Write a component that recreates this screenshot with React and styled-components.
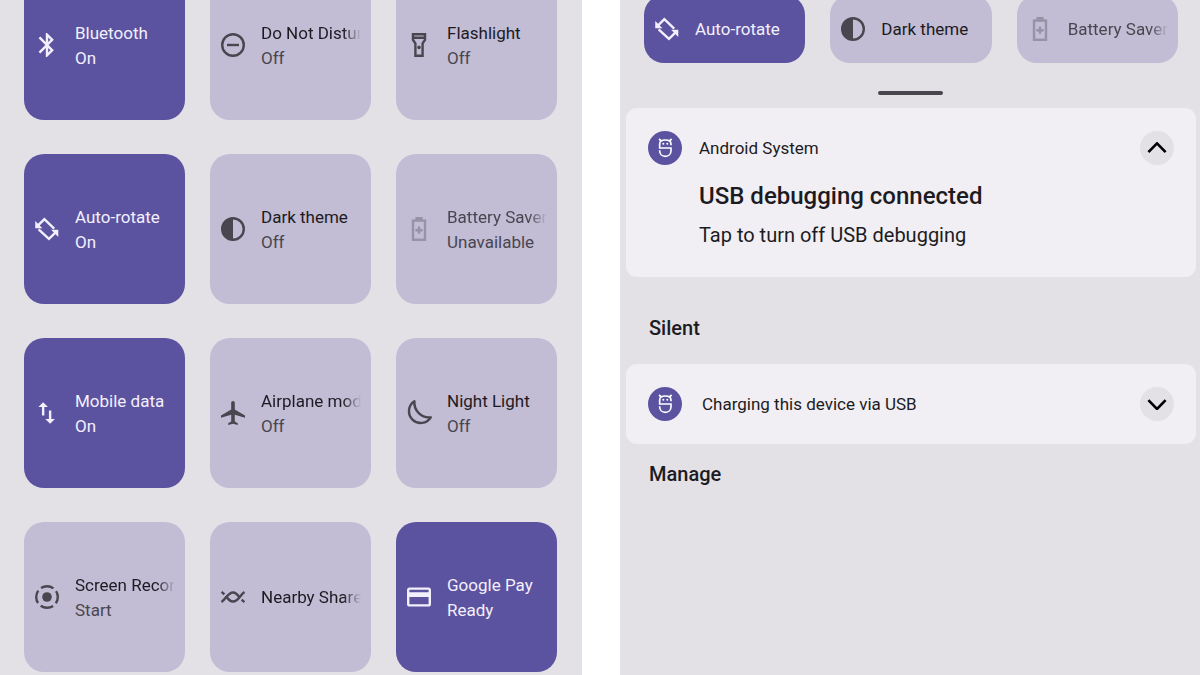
import React from "react";
import styled, { createGlobalStyle, css } from "styled-components";

const color = {
  panel: "#e3e0e6",
  card: "#f1eff4",
  tileOff: "#c2bcd5",
  tileOn: "#5b53a0",
  ink: "#1d1b22",
  inkSoft: "#4a464f",
  inkOnAccent: "#f3effc",
};

const GlobalStyle = createGlobalStyle`
  *, *::before, *::after { box-sizing: border-box; }
  body {
    margin: 0;
    background: #fff;
    font-family: Roboto, "Liberation Sans", sans-serif;
    color: ${color.ink};
  }
  button { font: inherit; color: inherit; border: 0; background: none; padding: 0; }
  h2, h3, p { margin: 0; }
`;

const Page = styled.main`
  display: grid;
  grid-template-columns: 582fr 580fr;
  column-gap: 38px;
  min-height: 100vh;
`;

const Panel = styled.section`
  min-width: 0;
  overflow: hidden;
  background: ${color.panel};
`;

const TileGrid = styled.div`
  display: grid;
  grid-template-columns: repeat(3, minmax(0, 1fr));
  gap: 34px 25px;
  margin-top: ${(p) => (p.$compact ? "-5px" : "-30px")};
  padding: ${(p) => (p.$compact ? "0 22px 0 24px" : "0 25px 0 24px")};
`;

const TileButton = styled.button`
  display: flex;
  align-items: center;
  gap: 16px;
  height: ${(p) => (p.$compact ? "68px" : "150px")};
  padding: 0 10px 0 11px;
  border-radius: 20px;
  text-align: left;
  background: ${(p) => (p.$on ? color.tileOn : color.tileOff)};
  color: ${(p) => (p.$on ? color.inkOnAccent : color.inkSoft)};
`;

const Glyph = styled.svg`
  flex: none;
  width: 24px;
  height: 24px;
  overflow: visible;
  opacity: ${(p) => (p.$dim ? 0.35 : 1)};
`;

const TileText = styled.span`
  display: flex;
  flex-direction: column;
  flex: 1;
  min-width: 0;
  padding-top: ${(p) => (p.$stacked ? "2px" : "0")};
  font-size: 17px;
  line-height: 25px;
`;

const TileTitle = styled.span`
  overflow: hidden;
  white-space: nowrap;
  ${(p) => p.$strong && css`color: ${color.ink};`}
  ${(p) => p.$fade && css`mask-image: linear-gradient(to left, transparent, #000 18px);`}
`;

const Handle = styled.div`
  width: 65px;
  height: 4px;
  margin: 28px auto 13px;
  border-radius: 2px;
  background: ${color.inkSoft};
`;

const Card = styled.article`
  margin: 0 4px 0 6px;
  padding: ${(p) => (p.$expanded ? "23px 22px 30px" : "23px 22px")};
  border-radius: 11px;
  background: ${color.card};
`;

const CardHeader = styled.header`
  display: flex;
  align-items: center;
  gap: ${(p) => (p.$expanded ? "17px" : "20px")};
`;

const AppBadge = styled.svg`
  flex: none;
  width: 34px;
  height: 34px;
`;

const CardLabel = styled.span`
  flex: 1;
  font-size: 17px;
  line-height: 24px;
`;

const ExpandButton = styled.button`
  display: grid;
  place-items: center;
  width: 34px;
  height: 34px;
  border-radius: 50%;
  background: ${color.panel};
`;

const CardBody = styled.div`
  padding-left: 51px;
`;

const CardTitle = styled.h3`
  margin-top: 16px;
  font-size: 24px;
  font-weight: 500;
  line-height: 30px;
`;

const CardText = styled.p`
  margin-top: 12px;
  font-size: 20px;
  line-height: 24px;
`;

const SectionTitle = styled.h2`
  margin: 37px 29px 22px;
  font-size: 20px;
  font-weight: 500;
  line-height: 28px;
`;

const ManageButton = styled.button`
  display: block;
  margin: 16px 29px;
  && {
    font-size: 20px;
    font-weight: 500;
    line-height: 28px;
  }
`;

const stroke = { fill: "none", stroke: "currentColor", strokeWidth: 2 };

const shapes = {
  bluetooth: (
    <path
      fill="currentColor"
      d="M17.71 7.71 12 2h-1v7.59L6.41 5 5 6.41 10.59 12 5 17.59 6.41 19 11 14.41V22h1l5.71-5.71-4.3-4.29 4.3-4.29zM13 5.83l1.88 1.88L13 9.59V5.83zm1.88 10.46L13 18.17v-3.76l1.88 1.88z"
    />
  ),
  dnd: (
    <g {...stroke}>
      <circle cx="12" cy="12" r="9" />
      <path d="M7 12h10" />
    </g>
  ),
  flashlight: (
    <g fill="currentColor">
      <path d="M18 2H6v6l2 3v11h8V11l2-3V2zm-2 2v1H8V4h8zm-2 6.4V20h-4v-9.6l-2-3V7h8v.4l-2 3z" />
      <circle cx="12" cy="14" r="1.5" />
    </g>
  ),
  rotate: (
    <g>
      <path {...stroke} d="M4.4 9.2 9.8 3.8l8.2 7.8" />
      <path {...stroke} d="M5 12.4l8.6 7.8 5.8-5.6" />
      <path fill="currentColor" d="M2.2 5.4v6H8.2zM21.4 18.6v-6h-6z" />
    </g>
  ),
  contrast: (
    <g>
      <circle {...stroke} cx="12" cy="12" r="9" />
      <path fill="currentColor" d="M12 3a9 9 0 0 0 0 18z" />
    </g>
  ),
  battery: (
    <g>
      <rect {...stroke} x="7" y="5" width="10" height="16" />
      <path fill="currentColor" d="M9 2h6v3H9z" />
      <path {...stroke} d="M12 10v6M9 13h6" />
    </g>
  ),
  data: (
    <path
      fill="currentColor"
      d="M15.6 17v-7h-2v7h-3l4 4 4-4zM8.8 3l-4 4h3v7h2V7h3z"
    />
  ),
  airplane: (
    <path
      fill="currentColor"
      d="M22 16v-2l-8.5-5V3.5C13.5 2.67 12.83 2 12 2s-1.5.67-1.5 1.5V9L2 14v2l8.5-2.5V19L8 20.5V22l4-1 4 1v-1.5L13.5 19v-5.5z"
    />
  ),
  moon: (
    <path
      {...stroke}
      strokeLinejoin="round"
      d="M8.2 2.2A9.8 9.8 0 1 0 21.8 15.6 12.3 12.3 0 0 1 8.2 2.2z"
    />
  ),
  record: (
    <g>
      <circle {...stroke} cx="12" cy="12" r="9" strokeDasharray="11 3.137" strokeDashoffset="5.5" />
      <circle cx="12" cy="12" r="4" fill="currentColor" />
    </g>
  ),
  nearby: (
    <g {...stroke}>
      <path d="M2.4 16.2C6 14 7.6 8.2 12 8.2c2.8 0 4.2 2.2 5.8 4.6M19.2 14.2l2.3 2" />
      <path d="M21.6 7.8C18 10 16.4 15.8 12 15.8c-2.8 0-4.2-2.2-5.8-4.6M4.8 9.8 2.5 7.8" />
    </g>
  ),
  card: (
    <path
      fill="currentColor"
      d="M20 4H4c-1.11 0-1.99.89-1.99 2L2 18c0 1.11.89 2 2 2h16c1.11 0 2-.89 2-2V6c0-1.11-.89-2-2-2zm0 14H4v-6h16v6zm0-10H4V6h16v2z"
    />
  ),
};

const tiles = [
  { icon: "bluetooth", title: "Bluetooth", status: "On", on: true },
  { icon: "dnd", title: "Do Not Disturb", status: "Off", fade: true },
  { icon: "flashlight", title: "Flashlight", status: "Off" },
  { icon: "rotate", title: "Auto-rotate", status: "On", on: true },
  { icon: "contrast", title: "Dark theme", status: "Off" },
  { icon: "battery", title: "Battery Saver", status: "Unavailable", disabled: true, fade: true },
  { icon: "data", title: "Mobile data", status: "On", on: true },
  { icon: "airplane", title: "Airplane mode", status: "Off", fade: true },
  { icon: "moon", title: "Night Light", status: "Off" },
  { icon: "record", title: "Screen Record", status: "Start", fade: true },
  { icon: "nearby", title: "Nearby Share", fade: true },
  { icon: "card", title: "Google Pay", status: "Ready", on: true },
];

function Tile({ icon, title, status, on, disabled, fade, compact }) {
  const showStatus = !!status && !compact;
  return (
    <TileButton type="button" $on={on} $compact={compact} disabled={disabled} aria-pressed={!!on}>
      <Glyph viewBox="2 2 20 20" $dim={disabled} aria-hidden="true">
        {shapes[icon]}
      </Glyph>
      <TileText $stacked={showStatus}>
        <TileTitle $strong={!on && !disabled} $fade={fade}>{title}</TileTitle>
        {showStatus && <span>{status}</span>}
      </TileText>
    </TileButton>
  );
}

function SystemBadge() {
  return (
    <AppBadge viewBox="0 0 102 102" aria-hidden="true">
      <circle cx="51" cy="51" r="51" fill={color.tileOn} />
      <g fill="none" stroke="#fff" strokeWidth="5">
        <path d="M69 43v-4c0-8-6-12-17-12s-17 4-17 12v12h34v8c0 10-7 17-17 17s-17-7-17-17v-1" />
        <path d="M33 24l7 6M71 24l-7 6" />
      </g>
      <circle cx="46" cy="38" r="3" fill="#fff" />
      <circle cx="58" cy="38" r="3" fill="#fff" />
    </AppBadge>
  );
}

function Expander({ open }) {
  return (
    <ExpandButton type="button" aria-expanded={open} aria-label={open ? "Collapse" : "Expand"}>
      <svg width="20" height="12" viewBox="0 0 20 12" fill="none" stroke="#000" strokeWidth="2.6" aria-hidden="true">
        <path d={open ? "M1.4 10.2 10 1.4l8.6 8.8" : "M1.4 2.2 10 11l8.6-8.8"} />
      </svg>
    </ExpandButton>
  );
}

export default function App() {
  return (
    <>
      <GlobalStyle />
      <Page>
        <Panel aria-label="Quick settings">
          <TileGrid>
            {tiles.map((t) => (
              <Tile key={t.title} {...t} />
            ))}
          </TileGrid>
        </Panel>
        <Panel aria-label="Notifications">
          <TileGrid $compact>
            {tiles.slice(3, 6).map((t) => (
              <Tile key={t.title} {...t} compact />
            ))}
          </TileGrid>
          <Handle />
          <Card $expanded>
            <CardHeader $expanded>
              <SystemBadge />
              <CardLabel>Android System</CardLabel>
              <Expander open />
            </CardHeader>
            <CardBody>
              <CardTitle>USB debugging connected</CardTitle>
              <CardText>Tap to turn off USB debugging</CardText>
            </CardBody>
          </Card>
          <SectionTitle>Silent</SectionTitle>
          <Card>
            <CardHeader>
              <SystemBadge />
              <CardLabel>Charging this device via USB</CardLabel>
              <Expander open={false} />
            </CardHeader>
          </Card>
          <ManageButton type="button">Manage</ManageButton>
        </Panel>
      </Page>
    </>
  );
}
